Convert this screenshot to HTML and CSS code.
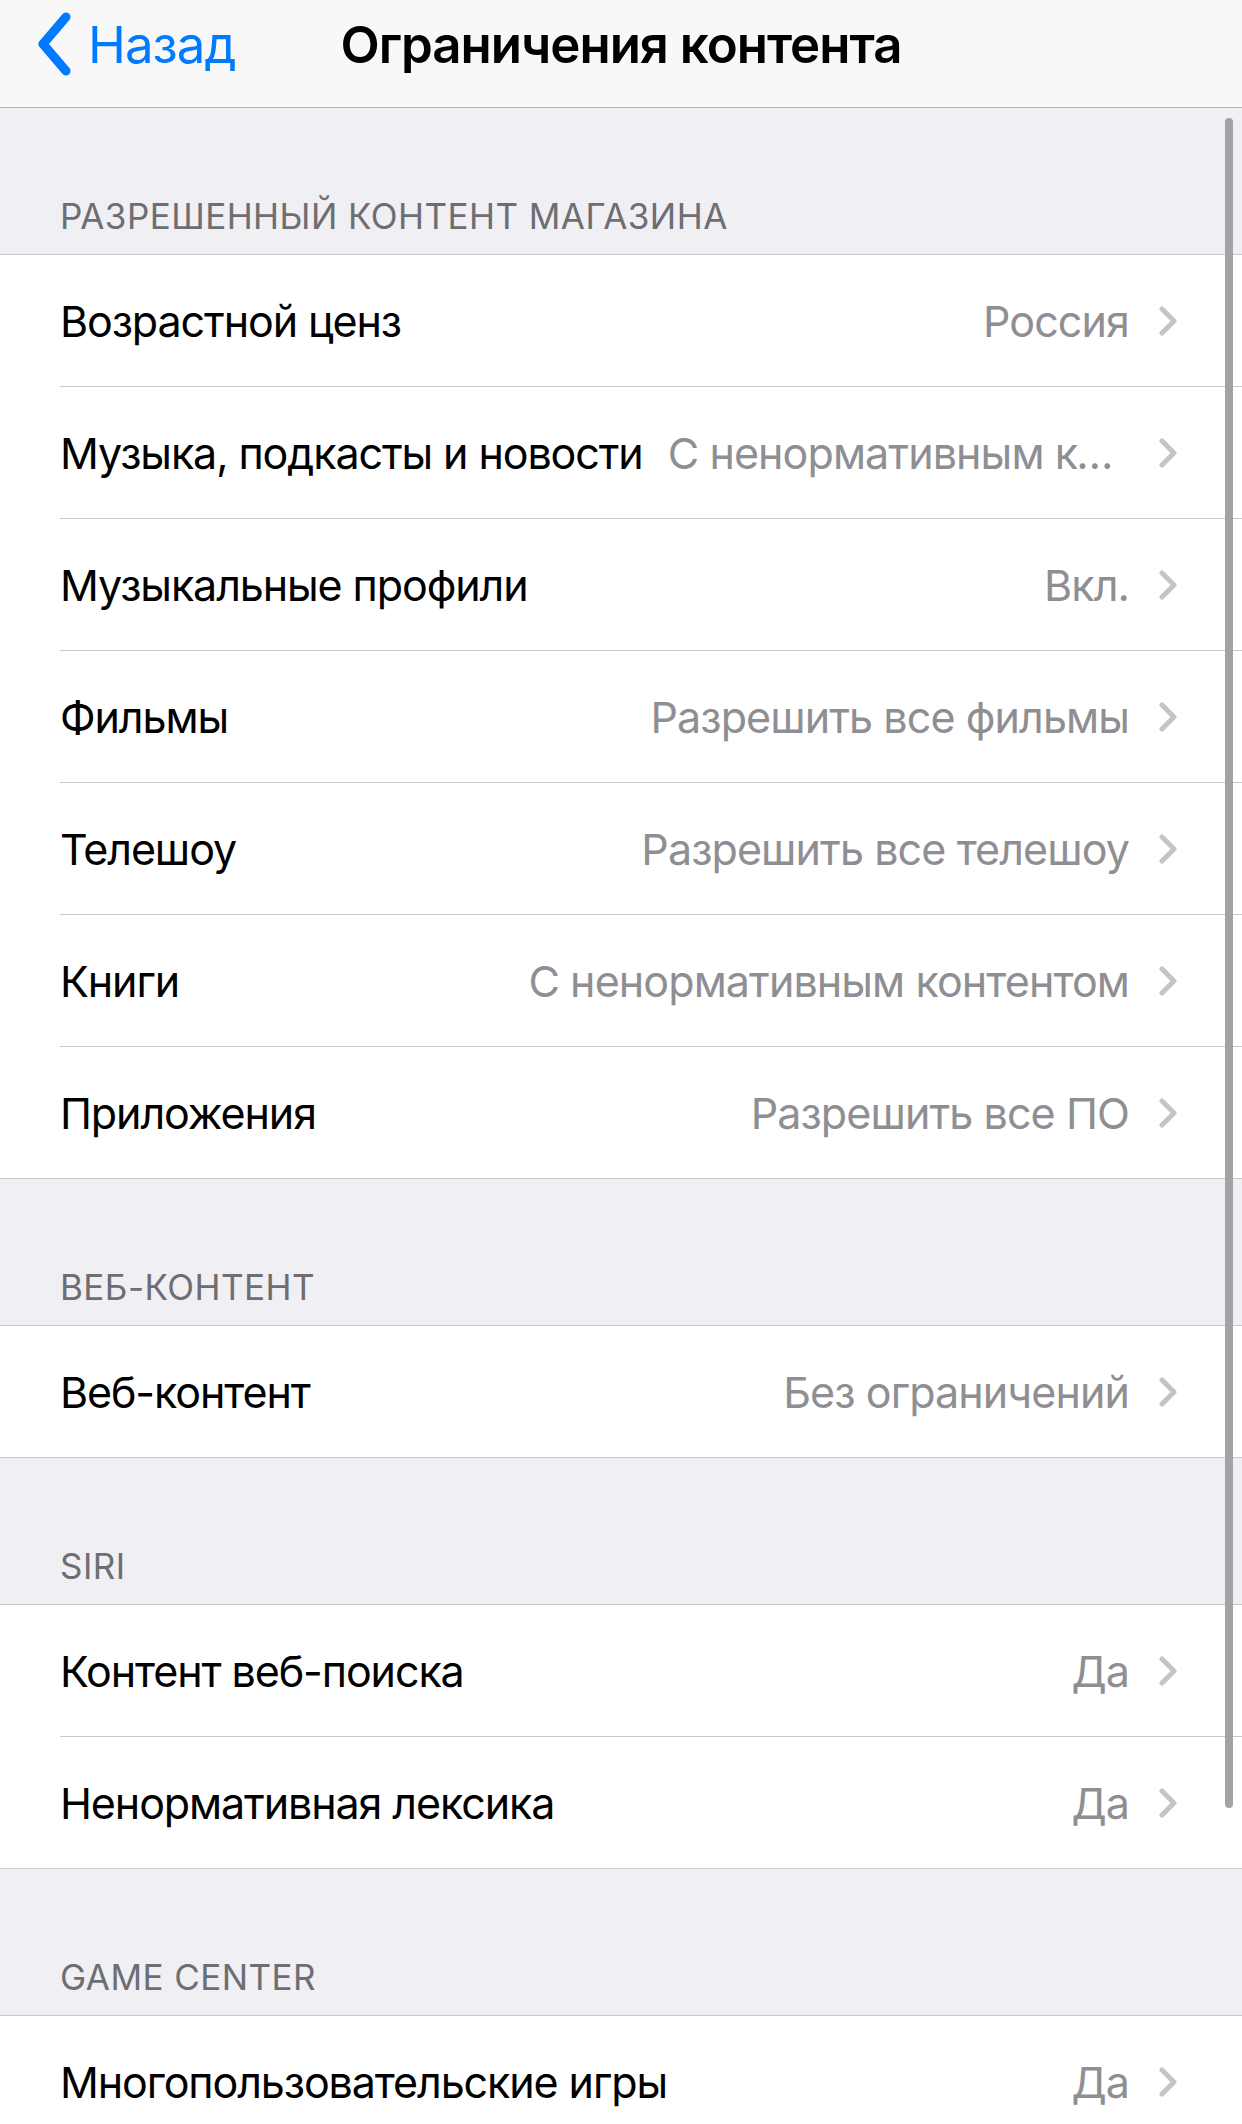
FILE: index.html
```html
<!DOCTYPE html>
<html lang="ru">
<head>
    <meta charset="UTF-8">
    <meta name="viewport" content="width=device-width, initial-scale=1.0">
    <title>Ограничения контента</title>
    <link rel="stylesheet" href="styles.css">
</head>
<body>
    <div class="nav">
        <div class="back">
            <svg class="back-icon" width="40" height="64" viewBox="0 0 40 64">
                <path d="M32 5 L9 32 L32 59" fill="none" stroke="#007aff" stroke-width="9" stroke-linecap="round" stroke-linejoin="round"/>
            </svg>
            <span>Назад</span>
        </div>
        <div class="title">Ограничения контента</div>
    </div>

    <div class="page">
        <div class="scroll-bar"></div>

        <div class="section-header">Разрешенный контент магазина</div>
        <div class="group">
            <div class="row"><div class="row-inner"><span class="label">Возрастной ценз</span><span class="value">Россия</span><svg class="chevron" width="18" height="30" viewBox="0 0 18 30"><path d="M3 3 L15 15 L3 27" /></svg></div></div>
            <div class="row"><div class="row-inner"><span class="label">Музыка, подкасты и новости</span><span class="value">С ненормативным контентом</span><svg class="chevron" width="18" height="30" viewBox="0 0 18 30"><path d="M3 3 L15 15 L3 27" /></svg></div></div>
            <div class="row"><div class="row-inner"><span class="label">Музыкальные профили</span><span class="value">Вкл.</span><svg class="chevron" width="18" height="30" viewBox="0 0 18 30"><path d="M3 3 L15 15 L3 27" /></svg></div></div>
            <div class="row"><div class="row-inner"><span class="label">Фильмы</span><span class="value">Разрешить все фильмы</span><svg class="chevron" width="18" height="30" viewBox="0 0 18 30"><path d="M3 3 L15 15 L3 27" /></svg></div></div>
            <div class="row"><div class="row-inner"><span class="label">Телешоу</span><span class="value">Разрешить все телешоу</span><svg class="chevron" width="18" height="30" viewBox="0 0 18 30"><path d="M3 3 L15 15 L3 27" /></svg></div></div>
            <div class="row"><div class="row-inner"><span class="label">Книги</span><span class="value">С ненормативным контентом</span><svg class="chevron" width="18" height="30" viewBox="0 0 18 30"><path d="M3 3 L15 15 L3 27" /></svg></div></div>
            <div class="row"><div class="row-inner"><span class="label">Приложения</span><span class="value">Разрешить все ПО</span><svg class="chevron" width="18" height="30" viewBox="0 0 18 30"><path d="M3 3 L15 15 L3 27" /></svg></div></div>
        </div>

        <div class="section-header">Веб-контент</div>
        <div class="group">
            <div class="row"><div class="row-inner"><span class="label">Веб-контент</span><span class="value">Без ограничений</span><svg class="chevron" width="18" height="30" viewBox="0 0 18 30"><path d="M3 3 L15 15 L3 27" /></svg></div></div>
        </div>

        <div class="section-header">Siri</div>
        <div class="group">
            <div class="row"><div class="row-inner"><span class="label">Контент веб-поиска</span><span class="value">Да</span><svg class="chevron" width="18" height="30" viewBox="0 0 18 30"><path d="M3 3 L15 15 L3 27" /></svg></div></div>
            <div class="row"><div class="row-inner"><span class="label">Ненормативная лексика</span><span class="value">Да</span><svg class="chevron" width="18" height="30" viewBox="0 0 18 30"><path d="M3 3 L15 15 L3 27" /></svg></div></div>
        </div>

        <div class="section-header">Game Center</div>
        <div class="group">
            <div class="row"><div class="row-inner"><span class="label">Многопользовательские игры</span><span class="value">Да</span><svg class="chevron" width="18" height="30" viewBox="0 0 18 30"><path d="M3 3 L15 15 L3 27" /></svg></div></div>
        </div>
    </div>
</body>
</html>
```

FILE: styles.css
```css
body {
    margin: 0;
    background: #efeff4;
    font-family: "Inter", "Roboto", sans-serif;
    -webkit-font-smoothing: antialiased;
    overflow: hidden;
}

.nav {
    height: 107px;
    background: #f8f8f8;
    border-bottom: 1px solid #b5b5b8;
    display: flex;
    align-items: center;
    justify-content: center;
    position: relative;
}

.back {
    position: absolute;
    left: 34px;
    top: 12px;
    display: flex;
    align-items: center;
    gap: 14px;
    color: #007aff;
    font-size: 51px;
    letter-spacing: -1px;
}

.back-icon {
    display: block;
}

.title {
    font-size: 51px;
    font-weight: 600;
    letter-spacing: -1px;
    color: #000;
    margin-bottom: 18px;
}

.page {
    position: relative;
}

.scroll-bar {
    position: absolute;
    right: 9px;
    top: 10px;
    width: 8px;
    height: 1690px;
    border-radius: 4px;
    background: #a3a3a6;
}

.section-header {
    height: 146px;
    box-sizing: border-box;
    display: flex;
    align-items: flex-end;
    padding: 0 60px 16px;
    font-size: 35px;
    line-height: 44px;
    letter-spacing: 0.45px;
    text-transform: uppercase;
    color: #6d6d72;
}

.group {
    background: #fff;
    border-top: 1px solid #c8c7cc;
    border-bottom: 1px solid #c8c7cc;
}

.row {
    padding-left: 60px;
}

.row-inner {
    height: 131px;
    display: flex;
    align-items: center;
    border-bottom: 1px solid #c8c7cc;
    padding-right: 65px;
}

.row:last-child .row-inner {
    border-bottom: none;
}

.label {
    font-size: 43px;
    color: #000;
    white-space: nowrap;
    flex-shrink: 0;
    letter-spacing: -1.1px;
}

.value {
    flex: 1;
    min-width: 0;
    margin-left: 25px;
    font-size: 43px;
    color: #8e8e93;
    text-align: right;
    white-space: nowrap;
    overflow: hidden;
    text-overflow: ellipsis;
    letter-spacing: -0.9px;
}

.chevron {
    margin-left: 30px;
    flex-shrink: 0;
    fill: none;
    stroke: #c4c4c7;
    stroke-width: 5;
    stroke-linecap: round;
    stroke-linejoin: round;
}
```
